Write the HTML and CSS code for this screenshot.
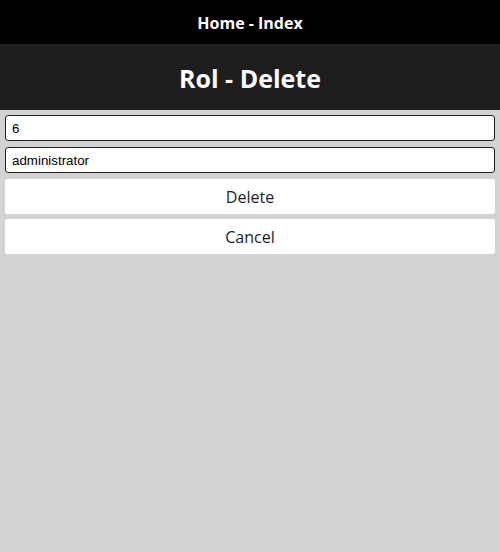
FILE: index.html
```html
<!DOCTYPE html>
<html lang="en">
<head>
<meta charset="utf-8">
<title>Rol - Delete</title>
<link rel="stylesheet" href="styles.css">
</head>
<body>
<header class="topbar">
  <a class="topbar-link" href="#">Home - Index</a>
</header>
<div class="titlebar">
  <h1 class="title">Rol - Delete</h1>
</div>
<form class="form">
  <input class="field" type="text" value="6" readonly>
  <input class="field" type="text" value="administrator" readonly>
  <button class="btn" type="button">Delete</button>
  <button class="btn" type="button">Cancel</button>
</form>
</body>
</html>
```
FILE: styles.css
```css
html, body {
  margin: 0;
  padding: 0;
}
body {
  background: #d3d3d3;
  min-height: 552px;
  font-family: "Open Sans", "DejaVu Sans", sans-serif;
}
.topbar {
  height: 44px;
  background: #000;
  display: flex;
  align-items: center;
  justify-content: center;
}
.topbar-link {
  color: #fff;
  text-decoration: none;
  font-weight: 700;
  font-size: 16px;
  line-height: 1;
  padding-top: 1px;
}
.titlebar {
  height: 66px;
  background: #1e1e1e;
  display: flex;
  align-items: center;
  justify-content: center;
}
.title {
  margin: 0;
  color: #fff;
  font-size: 25px;
  font-weight: 700;
  line-height: 1;
  padding-top: 2px;
}
.form {
  display: flex;
  flex-direction: column;
  padding: 5px 5px;
}
.field {
  box-sizing: border-box;
  height: 26px;
  margin: 0 0 6px 0;
  padding: 0 6px;
  border: 1px solid #222;
  border-radius: 3px;
  background: #fff;
  color: #000;
  font-family: "Liberation Sans", Arial, sans-serif;
  font-size: 13.33px;
  outline: none;
}
.btn {
  height: 35px;
  margin: 0 0 5px 0;
  border: none;
  border-radius: 2px;
  background: #fff;
  color: #1c1c2c;
  font-family: "Open Sans", "DejaVu Sans", sans-serif;
  font-size: 16px;
  padding: 0;
}
```
